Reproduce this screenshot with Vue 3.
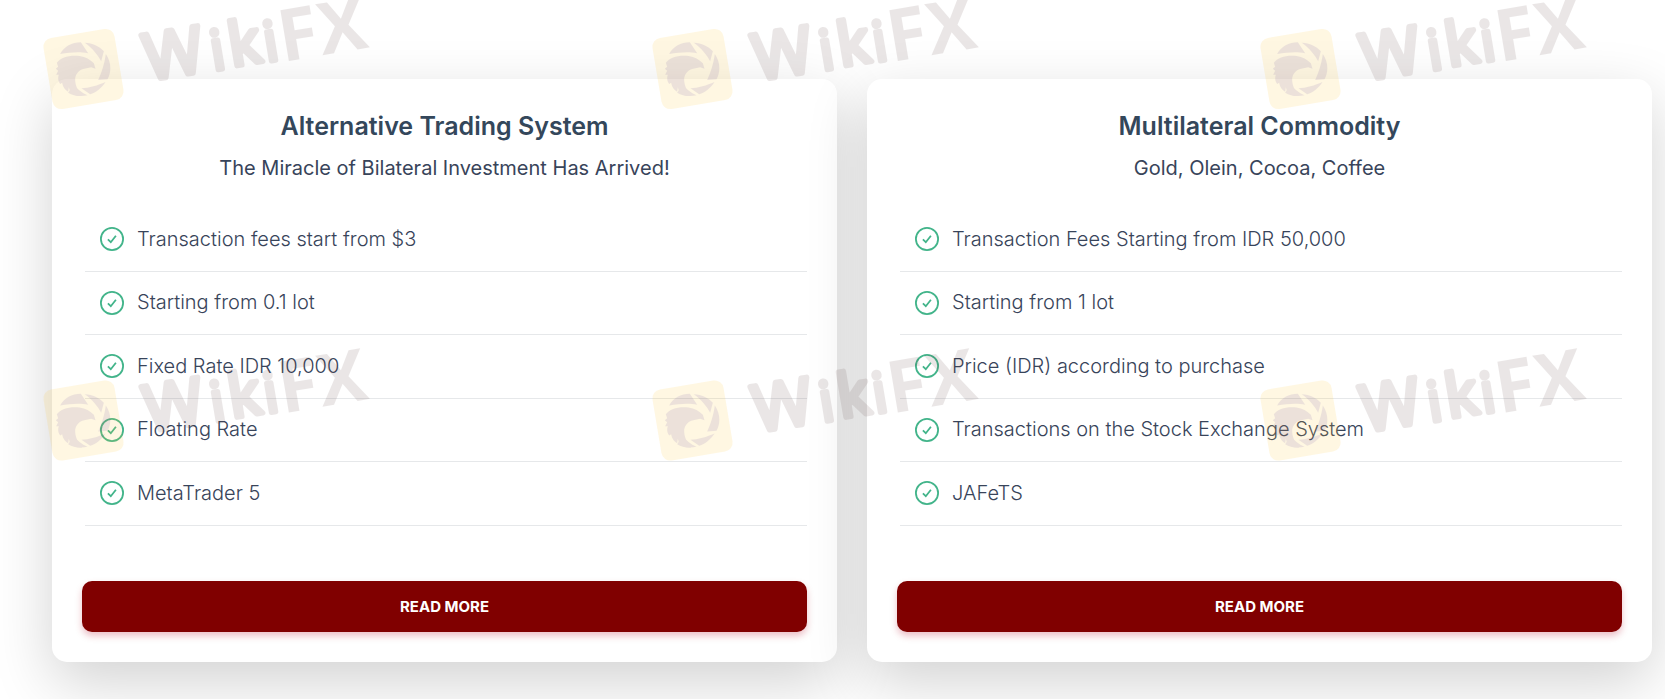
<template>
  <div class="pricing">
    <div class="card-list">
      <div v-for="plan in plans" :key="plan.title" class="card">
        <h3 class="title">{{ plan.title }}</h3>
        <p class="subtitle">{{ plan.subtitle }}</p>

        <ul class="feature-list">
          <li v-for="feature in plan.features" :key="feature" class="feature">
            <svg class="check-icon" viewBox="0 0 24 24" xmlns="http://www.w3.org/2000/svg">
              <circle cx="12" cy="12" r="11.1" />
              <path d="M7.9 12.4 L10.8 15.2 L15.9 8.8" />
            </svg>
            <span class="feature-text">{{ feature }}</span>
          </li>
        </ul>

        <button class="btn-more">READ MORE</button>
      </div>
    </div>

    <!-- watermark -->
    <svg class="watermark" viewBox="0 0 1665 699" xmlns="http://www.w3.org/2000/svg">
      <g
        v-for="mark in marks"
        :key="mark.id"
        :transform="`translate(${mark.x}, ${mark.y}) rotate(-9.5)`"
      >
        <rect class="mark-box" x="-36" y="-36" width="72" height="72" rx="9" />
        <g class="mark-logo" transform="rotate(9.5) scale(0.3333) translate(-250, -207)">
          <path d="M180 162 C192 140 215 127 242 127 L264 160 C240 154 210 157 180 162 Z" />
          <path d="M254 128 C277 129 297 138 311 154 L303 184 C294 165 276 144 254 128 Z" />
          <path d="M317 162 C334 187 334 216 322 238 L294 240 C303 222 313 192 317 162 Z" />
          <path d="M316 246 C304 264 288 277 270 283 L244 265 C266 264 294 256 316 246 Z" />
          <path d="M262 286 C240 291 220 288 204 278 L220 254 C230 266 245 278 262 286 Z" />
          <path d="M170 188 C182 172 210 164 238 168 C256 170 270 179 281 190 L286 206 L273 202 L252 206 C236 210 228 220 225 234 C224 254 232 272 246 288 C228 288 218 284 210 276 L206 262 L204 275 C192 268 188 258 186 248 L180 252 C172 240 174 230 176 224 L168 224 L174 212 L167 206 L174 200 Z" />
        </g>
        <text class="mark-text" y="22">
          <tspan class="round" x="61.5" font-size="64">W</tspan><tspan class="round thin" x="128" y="23" font-size="55">i</tspan><tspan class="round" x="147" y="22" font-size="60">k</tspan><tspan class="round thin" x="182" y="23" font-size="55">i</tspan><tspan x="197.5" y="26" font-size="72">F</tspan><tspan x="238" y="26" font-size="72">X</tspan>
        </text>
      </g>
    </svg>
  </div>
</template>

<script setup>
const plans = [
  {
    title: 'Alternative Trading System',
    subtitle: 'The Miracle of Bilateral Investment Has Arrived!',
    features: [
      'Transaction fees start from $3',
      'Starting from 0.1 lot',
      'Fixed Rate IDR 10,000',
      'Floating Rate',
      'MetaTrader 5'
    ]
  },
  {
    title: 'Multilateral Commodity',
    subtitle: 'Gold, Olein, Cocoa, Coffee',
    features: [
      'Transaction Fees Starting from IDR 50,000',
      'Starting from 1 lot',
      'Price (IDR) according to purchase',
      'Transactions on the Stock Exchange System',
      'JAFeTS'
    ]
  }
]

const marks = [69, 420.5].flatMap((y) =>
  [83.5, 692.5, 1300.5].map((x) => ({ id: `${x}-${y}`, x, y }))
)
</script>

<style>
body {
  margin: 0;
  background: #fff;
}
</style>

<style scoped>
.pricing {
  position: relative;
  width: 100%;
  height: 699px;
  box-sizing: border-box;
  padding: 79px 13px 0 52px;
  overflow: hidden;
  font-family: Inter, "Liberation Sans", sans-serif;
  color: #38445a;
}

.card-list {
  display: grid;
  grid-template-columns: repeat(2, 1fr);
  gap: 30px;
}

.card {
  display: flex;
  flex-direction: column;
  height: 583px;
  box-sizing: border-box;
  padding: 30px;
  background: #fff;
  border-radius: 15px;
  box-shadow: 0 20px 60px rgba(0, 0, 0, 0.18);
}

.title {
  margin: 0;
  font-size: 25px;
  font-weight: 600;
  line-height: 34px;
  text-align: center;
  color: #34475b;
}

.subtitle {
  margin: 9px 0 0;
  font-size: 20px;
  font-weight: 400;
  line-height: 32px;
  text-align: center;
}

.feature-list {
  list-style: none;
  margin: 24px 0 0;
  padding: 0 0 0 3px;
}

.feature {
  display: flex;
  align-items: center;
  height: 63.5px;
  box-sizing: border-box;
  padding-left: 15px;
  border-bottom: 1px solid #e6e8ea;
}

.check-icon {
  width: 24px;
  height: 24px;
  margin-right: 13px;
  fill: none;
  stroke: #42b48a;
  stroke-width: 1.8;
}

.feature-text {
  padding-bottom: 1px;
  font-size: 20px;
  font-weight: 300;
  line-height: 32px;
}

.btn-more {
  height: 51px;
  margin-top: auto;
  border: none;
  border-radius: 10px;
  background: #800000;
  box-shadow: 0 4px 7px rgba(180, 0, 30, 0.25);
  color: #fff;
  font-family: inherit;
  font-size: 15px;
  font-weight: 700;
  cursor: pointer;
}

.watermark {
  position: absolute;
  top: 0;
  left: 0;
  width: 1665px;
  height: 699px;
  pointer-events: none;
}

.mark-box {
  fill: rgba(255, 200, 60, 0.15);
}

.mark-logo {
  fill: #5a3c9c;
  opacity: 0.11;
}

.mark-text {
  font-family: "Open Sans", sans-serif;
  font-weight: 700;
  fill: #5a3c3c;
  opacity: 0.12;
}

.round {
  font-weight: 400;
  stroke: #5a3c3c;
  stroke-width: 5.5;
  stroke-linejoin: round;
}

.thin {
  stroke-width: 5;
}
</style>
